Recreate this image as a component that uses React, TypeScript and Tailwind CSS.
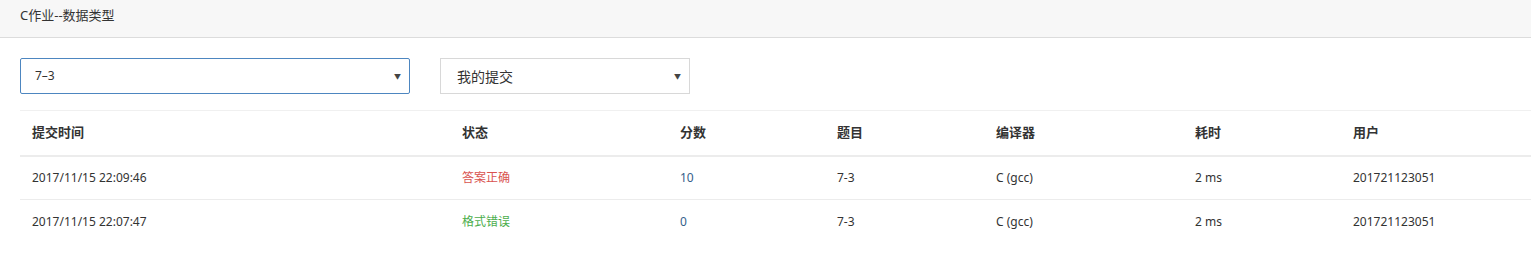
import React from 'react';

const rows = [
  { time: '2017/11/15 22:09:46', status: '答案正确', ok: true, score: '10', problem: '7-3', compiler: 'C (gcc)', cost: '2 ms', user: '201721123051' },
  { time: '2017/11/15 22:07:47', status: '格式错误', ok: false, score: '0', problem: '7-3', compiler: 'C (gcc)', cost: '2 ms', user: '201721123051' },
];

const cols = ['w-[430px]', 'w-[218px]', 'w-[157px]', 'w-[159px]', 'w-[199px]', 'w-[158px]', 'flex-1'];

const Caret = () => (
  <span className="text-[7px] leading-none text-[#444]">▼</span>
);

export default function App() {
  return (
    <div className="w-[1531px] h-[270px] bg-white text-[#333] font-['Noto_Sans','Noto_Sans_CJK_SC',sans-serif]">
      <div className="h-[38px] bg-[#f7f7f7] border-b border-[#dcdcdc] px-5 flex items-center">
        <span className="text-[13px] -mt-[5px] text-[#333]">C作业--数据类型</span>
      </div>

      <div className="flex gap-[30px] px-5 pt-5">
        <div className="w-[390px] h-[36px] border border-[#4d86c0] rounded-[2px] flex items-center justify-between pl-[14px] pr-[8px]">
          <span className="text-[12px]">7–3</span>
          <Caret />
        </div>
        <div className="w-[250px] h-[36px] border border-[#d8d8d8] flex items-center justify-between pl-4 pr-[8px]">
          <span className="text-[14px]">我的提交</span>
          <Caret />
        </div>
      </div>

      <div className="ml-5 mt-[16px] border-t border-[#f0f0f0]">
        <div className="flex h-[46px] items-center border-b-2 border-[#ececec] text-[13px] font-bold">
          {['提交时间', '状态', '分数', '题目', '编译器', '耗时', '用户'].map((h, i) => (
            <div key={h} className={`${cols[i]} px-3`}>{h}</div>
          ))}
        </div>
        {rows.map((r, idx) => (
          <div
            key={r.time}
            className={`flex h-[43px] items-center text-[12px] ${idx === 0 ? 'border-b border-[#ececec]' : ''}`}
          >
            <div className={`${cols[0]} px-3`}>{r.time}</div>
            <div className={`${cols[1]} px-3 ${r.ok ? 'text-[#d9534f]' : 'text-[#4cae4c]'}`}>{r.status}</div>
            <div className={`${cols[2]} px-3 text-[#35608a]`}>{r.score}</div>
            <div className={`${cols[3]} px-3`}>{r.problem}</div>
            <div className={`${cols[4]} px-3`}>{r.compiler}</div>
            <div className={`${cols[5]} px-3`}>{r.cost}</div>
            <div className={`${cols[6]} px-3`}>{r.user}</div>
          </div>
        ))}
      </div>
    </div>
  );
}
